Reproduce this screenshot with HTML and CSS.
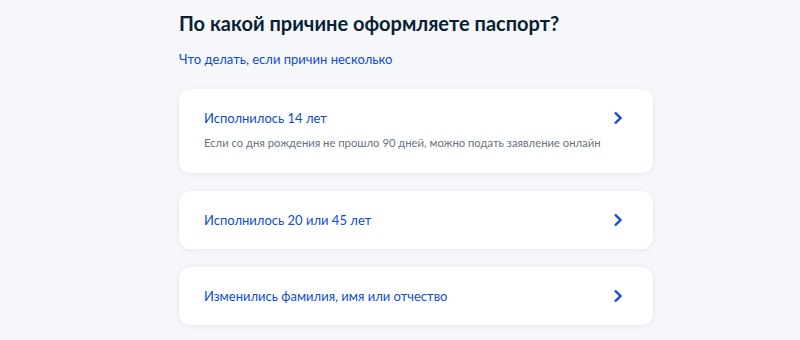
FILE: index.html
```html
<!DOCTYPE html>
<html>
<head>
    <title>Оформление паспорта</title>
    <meta name="viewport" content="width=device-width, initial-scale=1">
    <link rel="stylesheet" href="styles.css">
</head>
<body>
    <main class="content">
        <h1 class="title">По какой причине оформляете паспорт?</h1>
        <a class="help-link" href="#">Что делать, если причин несколько</a>

        <div class="reasons">
            <a class="reason" href="#">
                <div class="reason-text">
                    <div class="reason-name">Исполнилось 14 лет</div>
                    <div class="reason-hint">Если со дня рождения не прошло 90 дней, можно подать заявление онлайн</div>
                </div>
                <svg class="chevron" width="10" height="14" viewBox="0 0 10 14"><path d="M2 1.5 L7.5 7 L2 12.5" fill="none" stroke="#0d4cd3" stroke-width="2.4"/></svg>
            </a>
            <a class="reason" href="#">
                <div class="reason-text">
                    <div class="reason-name">Исполнилось 20 или 45 лет</div>
                </div>
                <svg class="chevron" width="10" height="14" viewBox="0 0 10 14"><path d="M2 1.5 L7.5 7 L2 12.5" fill="none" stroke="#0d4cd3" stroke-width="2.4"/></svg>
            </a>
            <a class="reason" href="#">
                <div class="reason-text">
                    <div class="reason-name">Изменились фамилия, имя или отчество</div>
                </div>
                <svg class="chevron" width="10" height="14" viewBox="0 0 10 14"><path d="M2 1.5 L7.5 7 L2 12.5" fill="none" stroke="#0d4cd3" stroke-width="2.4"/></svg>
            </a>
        </div>
    </main>
</body>
</html>
```

FILE: styles.css
```css
* {
    margin: 0;
    padding: 0;
    box-sizing: border-box;
}

body {
    background: #f5f7fb;
    color: #0b1f33;
    font-family: Lato, 'Noto Sans', sans-serif;
    min-height: 100vh;
}

.content {
    width: 474px;
    margin-left: 179px;
    padding-top: 9px;
    display: flex;
    flex-direction: column;
}

.title {
    font-size: 20px;
    line-height: 28px;
    font-weight: 700;
}

.help-link {
    margin-top: 12px;
    font-size: 13px;
    line-height: 20px;
    color: #0d4cd3;
    text-decoration: none;
    align-self: flex-start;
}

.reasons {
    margin-top: 20px;
    display: flex;
    flex-direction: column;
    gap: 18px;
}

.reason {
    display: flex;
    align-items: center;
    justify-content: space-between;
    background: #ffffff;
    border-radius: 12px;
    box-shadow: 0 1px 6px rgba(20, 40, 90, 0.07);
    padding: 19px 30px 19px 25px;
    text-decoration: none;
}

.reason-name {
    font-size: 13px;
    line-height: 20px;
    color: #0d4cd3;
}

.reason-hint {
    margin-top: 6px;
    margin-bottom: 2px;
    font-size: 11.25px;
    line-height: 18px;
    color: #66727f;
}

.reason:first-child .chevron {
    align-self: flex-start;
    margin-top: 3px;
}
```
